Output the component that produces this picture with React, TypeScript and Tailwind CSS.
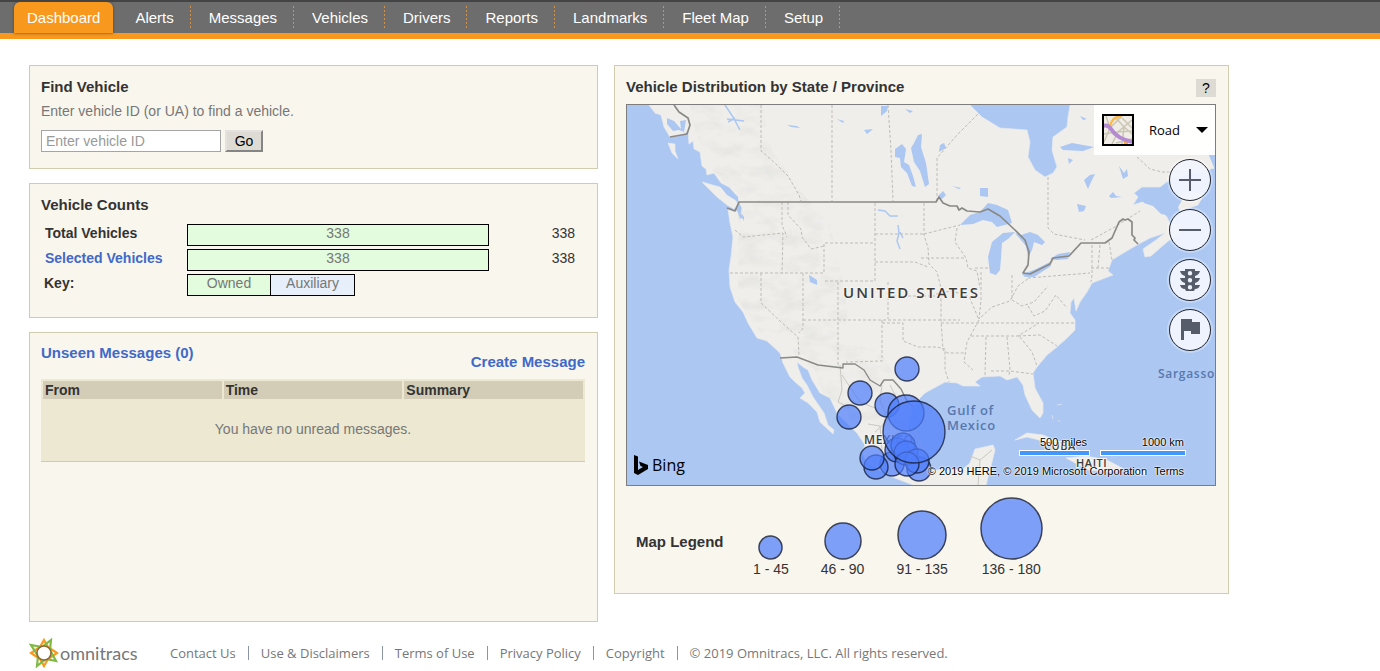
import React from "react";

const navItems = ["Alerts", "Messages", "Vehicles", "Drivers", "Reports", "Landmarks", "Fleet Map", "Setup"];

const footerLinks = ["Contact Us", "Use & Disclaimers", "Terms of Use", "Privacy Policy", "Copyright"];

const clusters = [
  [907, 369, 12],
  [860, 393, 12],
  [849, 417, 12],
  [887, 405, 12],
  [892, 464, 12],
  [897, 450, 12],
  [919, 469, 12],
  [876, 467, 12],
  [872, 458, 12],
  [906, 413, 18],
  [903, 445, 12],
  [906, 453, 12],
  [917, 461, 12],
  [907, 464, 12],
  [914, 432, 31],
];

const legend = [
  { label: "1 - 45", size: 25 },
  { label: "46 - 90", size: 38 },
  { label: "91 - 135", size: 50 },
  { label: "136 - 180", size: 63 },
];

function Card({ className = "", children }: { className?: string; children: React.ReactNode }) {
  return <section className={`border border-[#d0cdaf] bg-[#f9f6ee] ${className}`}>{children}</section>;
}

function NavBar() {
  return (
    <nav className="flex h-[39px] border-t-2 border-b-6 border-t-[#444] border-b-[#f8981d] bg-[#6d6d6d] pl-[14px] text-[15px] text-white">
      <a href="#dashboard" className="mr-1 flex items-center rounded-t-md bg-[#f8981d] px-[13px] shadow-[0_0_3px_#444]">
        Dashboard
      </a>
      {navItems.map((item) => (
        <a key={item} href={"#" + item} className="flex items-center pl-[18px]">
          {item}
          <svg className="ml-4 h-[24px] w-px" viewBox="0 0 1 24" shapeRendering="crispEdges" aria-hidden="true">
            <path d="M0 0h1v2h-1ZM0 4h1v2h-1ZM0 8h1v2h-1ZM0 12h1v2h-1ZM0 16h1v2h-1ZM0 20h1v2h-1Z" fill="#d8913f" />
          </svg>
        </a>
      ))}
    </nav>
  );
}

function MapDrawing() {
  return (
    <svg
      className="absolute inset-0 h-full w-full"
      viewBox="627 105 588 380"
      preserveAspectRatio="xMidYMid slice"
      role="img"
      aria-label="Vehicle distribution map"
    >
      <defs>
        <filter id="relief" x="0" y="0" width="1" height="1">
          <feTurbulence type="fractalNoise" baseFrequency=".05 .09" numOctaves="4" seed="11" />
          <feColorMatrix values="0 0 0 0 .6  0 0 0 0 .6  0 0 0 0 .58  1.2 0 0 0 -.5" />
        </filter>
        <clipPath id="mountains">
          <path d="M690 105H762L772 150L800 190L830 225L845 290L850 345L880 350L900 385L890 430L860 432L840 405L822 392L815 370L795 355L790 345L762 335L738 300V210L745 200L728 185L712 170L704 150L696 135Z" />
        </clipPath>
      </defs>
      <rect x="627" y="105" width="588" height="380" fill="#abc7f2" />
      <g fill="#efeeeb" stroke="#e6e9ec" strokeWidth=".7">
        <path d="M649 105L655 113L661 115L664 127L670 137L682 135L688 131L689 144L693 141L694 149L700 152L702 166L706 169L707 175L714 173L721 183L729 187L738 197L739 202L742 208L741 214L744 218L740 219L737 211L728 209L730 223L733 237L731 257L729 270L730 287L735 302L743 312L748 323L757 338L767 341L780 353L783 363L790 377L795 382L802 388L805 393L800 398L808 403L817 412L820 422L833 434L834 430L828 425L824 413L820 407L813 397L807 385L802 378L798 367L797 362L803 367L808 370L812 380L820 393L830 398L837 413L847 423L857 433L865 445L862 452L867 463L887 475L913 485H986L990 470L995 450L993 445L975 449L970 463L963 469L935 470L918 462L910 445L908 425L912 410L920 398L925 393L945 382L957 383L963 386L980 386L975 382L982 377L1000 376L1007 380L1017 377L1023 385L1025 395L1032 410L1040 418L1043 413L1043 403L1035 388L1033 373L1037 367L1047 355L1057 347L1067 338L1075 330L1075 320L1070 313L1071 302L1074 298L1076 311L1080 302L1087 292L1092 283L1113 275L1108 271L1112 260L1120 255L1137 245L1150 238L1165 233L1156 240L1143 249L1145 257L1151 256L1167 242L1183 230L1180 224L1170 224L1167 217L1157 207L1142 202L1133 205L1138 197L1134 193L1142 187L1160 187L1172 178L1215 168V105H1070L1068 117L1067 127L1053 137L1052 150L1057 167L1053 173L1045 177L1035 170L1028 157L1030 142L1027 130L1000 128L982 117L970 105Z" />
        <path d="M702 182L720 187L732 195L738 204L734 209L727 205L717 197Z" />
        <path d="M668 143L675 144L675 151L678 159L672 153Z" />
        <path d="M1015 440L1027 433L1043 435L1057 441L1075 452L1062 451L1043 441L1027 437ZM1066 458L1086 456L1107 460L1124 469L1112 472L1088 470ZM1136 471L1146 471L1146 475H1136Z" />
        <path d="M1176 202L1186 192L1204 194L1198 205L1180 211Z" />
        <path d="M1057 405l5-1M1058 420l2 2M1052 415l1 4" />
      </g>
      <g clipPath="url(#mountains)">
        <rect x="627" y="105" width="300" height="340" filter="url(#relief)" opacity=".45" />
      </g>
      <g fill="#abc7f2">
        <path d="M667 118L674 121L681 129L680 121L686 120L684 132L679 130L673 131L667 124Z" />
        <path d="M719 185L727 187L738 197L737 201L727 195ZM741 213l3 4v4l-2-4Z" />
        <path d="M960 225L970 215L980 212L988 203L997 205L1008 210L1012 223L997 227L992 222L983 220L973 224Z" />
        <path d="M992 242L1003 233L1015 232L1008 239L1002 243L1001 258L1000 270L996 275L990 273L988 257Z" />
        <path d="M1015 233L1021 235L1030 232L1038 235L1045 242L1042 245L1034 242L1032 250L1028 257L1026 246Z" />
        <path d="M1022 274L1034 270L1050 262L1051 266L1034 277L1025 277Z" />
        <path d="M1050 259L1058 254L1070 252L1068 259L1057 260Z" />
        <path d="M895 149L902 144L906 149L904 162L909 165L913 176L916 187L912 186L907 173L901 167L900 158L895 157Z" />
        <path d="M911 148L914 143L918 135L922 134L921 147L926 163L929 184L925 187L920 171L914 162Z" />
        <path d="M940 145l4-2l2 5l-7 4ZM980 188h8v9l-8-1ZM938 196l5-5l3 4l-4 4ZM952 186l9 2l-2 1Z" />
        <path d="M881 106h7l-1 5l-6 5ZM905 109l8 2l-3 2ZM837 119l7 2l-1 2ZM864 130l9-1l-6 5ZM787 125l10 1l3 2l-9-1Z" />
        <path d="M1060 147l12-4l22 4l-11 4l-20-1ZM1068 158l5 2l-4 4ZM1084 180l6-5l5-1l-4 8l-3 7ZM1119 166l5 7l3-4l1 7l-5 3ZM1077 204l9 2l-2 5l-5 1ZM1109 196l4-4l3 4l6 1l-11 1ZM1080 116l7 3l-4 1ZM1048 119l5-5l-2 6Z" />
        <path d="M809 275l8 5v5l-7-3Z" />
        <path d="M1144 192l14-3l18 3l6 8l-9 16l-12-2l-8-8l-9-3Z" />
        <path d="M1208 153L1215 147V170Z" />
      </g>
      <g fill="none" stroke="#abc7f2">
        <path d="M725 105L733 117L740 130M727 119L744 121M728 122L735 118M878 210l7 1l5 5l8 0M898 225l1 8l-2 8l3 8M900 232l3 6" strokeWidth="1.5" />
      </g>
      <g fill="none" stroke="#bfbcb8" strokeDasharray="3 2">
        <path d="M761 105V151L775 163L788 176L799 195L801 201M832 105V201M888 105L891 150L893 201M937 201V158L957 135L981 111M1048 177V228L1054 234L1085 240" />
        <path d="M782 202V225L787 237M788 202V215L801 229L802 237L811 249L824 246M735 230L743 237L764 235L783 233L782 273M730 273H824V243H875M875 203V281H824M761 273V303L780 321L798 337L799 355M803 273V328L799 333M803 320H960M838 282V365M888 282V319M882 320V361L846 362M882 323H903V341L918 347L937 347L945 349V370L949 382" />
        <path d="M875 234H924M875 262H915L928 267M888 296H935M924 203V235L928 248L929 264L937 272L941 288V320L943 350L948 353H966M921 258H966M924 234L960 225M957 228L955 242L966 258L968 268L977 271L980 288M975 268H992M936 294L951 291L969 296L979 320L967 342L964 362L973 370M981 272V300L979 319L992 307L1010 301L1018 286L1029 278M1012 275V300L1022 306L1034 302L1048 286M1028 278L1090 273M941 323H1075M971 336H1018L1039 323M986 337L985 375M1007 337L1010 369L1009 375M991 371H1010L1033 374M1020 337L1032 352L1037 366M1018 336L1040 335L1057 346M1028 306L1034 316L1045 311L1056 295L1067 308M1092 245V275L1091 282M1091 268L1110 268M1100 245L1098 268M1109 242L1112 260M1137 157L1150 169L1162 172H1185M1091 240L1113 228L1140 211" />
        <path d="M840 365L842 390L838 402L850 408M842 375L860 402L875 408M882 385L880 400L888 420L875 432M890 385L900 405M895 420L915 430L925 455M868 424L880 426L882 450M978 485L980 460L970 456M980 460L992 450" strokeDasharray="none" stroke="#cbc8c3" />
      </g>
      <g fill="none" stroke="#8a8985" strokeWidth="1.7" strokeLinejoin="round">
        <path d="M674 105L679 112L688 118L690 125L687 134L670 137" />
        <path d="M727 208L735 211L739 202H936L939 197L943 203L950 206L957 206L959 210L962 208L967 211L980 212L988 209L1000 216L1015 230L1025 240L1029 252L1028 265L1023 273L1030 274L1050 264L1053 258L1069 256L1081 243H1105L1112 238L1119 222L1123 219L1125 220L1128 219L1132 222V235L1135 238L1134 240L1138 244" />
        <path d="M780 358L797 357L818 365L843 368V364H855L864 370L870 380L880 386L884 380H893L901 389L908 403L914 407" strokeWidth="1.4" />
      </g>
      <g fill="#3d3d3d" className="font-['Open_Sans',sans-serif]" stroke="#f5f4f1" strokeWidth="2" paintOrder="stroke">
        <text x="843" y="298" className="text-[15px] font-semibold tracking-[2px]">UNITED STATES</text>
        <text x="864" y="444" className="text-[12px] font-semibold tracking-wider">MEXICO</text>
        <text x="1044" y="450" className="text-[11px] font-semibold tracking-wider">CUBA</text>
        <text x="1076" y="467" className="text-[11px] font-semibold tracking-wider">HAITI</text>
      </g>
      <g fill="#5878ae" className="font-['Open_Sans',sans-serif] font-semibold tracking-wider">
        <text x="947" y="415" className="text-[13px]">Gulf of</text>
        <text x="947" y="430" className="text-[13px]">Mexico</text>
        <text x="1158" y="378" className="text-[12px]">Sargasso</text>
        <text x="1042" y="493" className="text-[11px]">Caribbean Sea</text>
      </g>
      <g fill="#4f7dfc" fillOpacity=".7" stroke="#16203c" strokeOpacity=".8" strokeWidth="1.4">
        {clusters.map(([x, y, r]) => (
          <circle key={x + "-" + y} cx={x} cy={y} r={r} />
        ))}
      </g>
    </svg>
  );
}

function RoundButton({ label, children }: { label: string; children: React.ReactNode }) {
  return (
    <button
      type="button"
      aria-label={label}
      className="flex size-[42px] items-center justify-center rounded-full border border-[#22252c] bg-[#f1f5fd]/95 shadow-[0_0_0_2px_rgba(255,255,255,0.3)]"
    >
      <svg className="size-[22px]" viewBox="0 0 22 22" fill="#565c69" aria-hidden="true">
        {children}
      </svg>
    </button>
  );
}

function MapControls() {
  return (
    <div className="absolute top-0 right-0 flex flex-col items-end">
      <button type="button" className="flex h-[50px] w-[121px] items-center bg-white/95 pl-2 font-['Open_Sans',sans-serif] text-[13px] text-black">
        <svg className="size-8" viewBox="0 0 32 32" aria-hidden="true">
          <rect width="32" height="32" fill="#efede5" />
          <path d="M2 28L8 14L4 2M8 14L20 2M20 31L22 13L14 4M10 30L16 18L30 6M22 13L30 20M2 20L14 18L30 17M20 4L30 14M14 29L30 25" stroke="#cbc6b4" strokeWidth="1.5" fill="none" />
          <path d="M8 12Q10 3 19 2" stroke="#fdb94a" strokeWidth="2.5" fill="none" />
          <path d="M22 27h4v4h-4Z" fill="#fdb030" />
          <path d="M1 12Q6 10 9 15Q15 25 31 28" stroke="#b48bd0" strokeWidth="4" fill="none" />
          <rect x="1" y="1" width="30" height="30" fill="none" stroke="#000" strokeWidth="2" />
        </svg>
        <span className="ml-[15px]">Road</span>
        <svg className="ml-4 h-[6px] w-[12px]" viewBox="0 0 12 6" aria-hidden="true">
          <path d="M0 0H12L6 6Z" />
        </svg>
      </button>
      <div className="mt-1 mr-1 flex flex-col gap-2">
        <RoundButton label="Zoom in">
          <path d="M10 0h2v10h10v2H12v10h-2V12H0v-2h10Z" />
        </RoundButton>
        <RoundButton label="Zoom out">
          <path d="M0 10h22v2H0Z" />
        </RoundButton>
        <RoundButton label="Traffic">
          <path fillRule="evenodd" d="M6 0H16V2H21Q20 6 16 7V9H21Q20 13 16 14V16H21Q20 20 16 20L15 22H7L6 20Q2 20 1 16H6V14Q2 13 1 9H6V7Q2 6 1 2H6ZM11 2A2.2 2.2 0 1 0 11 6.4A2.2 2.2 0 1 0 11 2ZM11 9A2.2 2.2 0 1 0 11 13.4A2.2 2.2 0 1 0 11 9ZM11 16A2.2 2.2 0 1 0 11 20.4A2.2 2.2 0 1 0 11 16Z" />
        </RoundButton>
        <RoundButton label="Landmarks">
          <path d="M2 0H13V3H21V15H12V12H5V21H2Z" />
        </RoundButton>
      </div>
    </div>
  );
}

function MapScale() {
  return (
    <div className="absolute right-[29px] bottom-2 flex flex-col items-end font-['Liberation_Sans',Arial,sans-serif] text-[11px] text-black [text-shadow:0_0_2px_#fff,0_0_2px_#fff,0_0_1px_#fff]">
      <div className="flex gap-[10px] text-right leading-[15px]">
        <div className="w-[71px]">
          <span className="pr-[3px]">500 miles</span>
          <div className="h-[6px] border border-white bg-[#4197fb]" />
        </div>
        <div className="w-[86px]">
          <span className="pr-[2px]">1000 km</span>
          <div className="h-[6px] border border-white bg-[#4197fb]" />
        </div>
      </div>
      <div className="mt-[9px] flex gap-[7px] pr-[2px] leading-3 whitespace-nowrap">
        <span>© 2019 HERE, © 2019 Microsoft Corporation</span>
        <a href="#map-terms">Terms</a>
      </div>
    </div>
  );
}

function OmnitracsLogo() {
  return (
    <div className="flex w-[110px] items-center gap-px" role="img" aria-label="omnitracs">
      <svg className="size-[30px] shrink-0" viewBox="0 1 30 30" aria-hidden="true">
        <g fill="none" strokeWidth="2.2" strokeLinejoin="miter">
          <path d="M15 3L19 10L28 16L19 22L15 29L11 22L2 16L11 10Z" stroke="#f8981d" />
          <path d="M22 3L21 13L27 24L17 22L8 29L9 19L2 8L13 10Z" stroke="#7fba42" />
          <circle cx="15" cy="16" r="7" fill="#fff" stroke="#8a6a35" strokeWidth="1.6" />
        </g>
      </svg>
      <span className="font-[Lato,'Open_Sans',sans-serif] text-lg leading-6">omnitracs</span>
    </div>
  );
}

export default function App() {
  return (
    <div className="min-h-screen bg-white font-['Liberation_Sans',Arial,sans-serif] text-sm text-[#777]">
      <NavBar />
      <main className="mx-[29px] mt-[26px] grid max-w-[1200px] grid-cols-[569fr_615fr] items-start gap-4">
        <div className="flex flex-col gap-[14px]">
          <Card className="px-[11px] pt-3 pb-4">
            <h2 className="text-[15px] leading-[18px] font-bold text-[#333]">Find Vehicle</h2>
            <label htmlFor="vehicle-id" className="mt-[6px] block leading-[18px]">
              Enter vehicle ID (or UA) to find a vehicle.
            </label>
            <form className="mt-[10px] flex gap-1" onSubmit={(e) => e.preventDefault()}>
              <input
                id="vehicle-id"
                placeholder="Enter vehicle ID"
                className="h-[22px] w-[180px] border border-[#a5a5a5] bg-white px-1 placeholder:text-[#999]"
              />
              <button className="h-[22px] w-[38px] border-2 border-t-[#e4e2e0] border-r-[#858585] border-b-[#858585] border-l-[#e4e2e0] bg-[#dedbd5] leading-[18px] text-black">
                Go
              </button>
            </form>
          </Card>

          <Card className="px-[11px] pt-3 pb-[21px]">
            <h2 className="text-[15px] leading-[18px] font-bold text-[#333]">Vehicle Counts</h2>
            <dl className="mt-[10px] grid grid-cols-[146px_302px_1fr] gap-y-[3px] text-center leading-4">
              <dt className="pt-px pl-1 text-left font-bold text-[#333]">Total Vehicles</dt>
              <dd className="h-[22px] border border-black bg-[#e2fcdd]">338</dd>
              <dd className="pt-px pr-[11px] text-right text-[#333]">338</dd>
              <dt className="pt-px pl-1 text-left font-bold">
                <a href="#selected" className="text-[#4169c8]">Selected Vehicles</a>
              </dt>
              <dd className="h-[22px] border border-black bg-[#e2fcdd]">338</dd>
              <dd className="pt-px pr-[11px] text-right text-[#333]">338</dd>
              <dt className="pt-px pl-[3px] text-left font-bold text-[#333]">Key:</dt>
              <dd className="flex h-[22px]">
                <span className="w-[83px] border border-r-0 border-black bg-[#e2fcdd]">Owned</span>
                <span className="w-[85px] border border-black bg-[#e6effa]">Auxiliary</span>
              </dd>
            </dl>
          </Card>

          <Card className="px-[11px] pt-[11px] pb-[159px]">
            <div className="mr-px flex justify-between text-[15px] leading-[18px] font-bold text-[#4169c8]">
              <a href="#unseen">Unseen Messages (0)</a>
              <a href="#create" className="mt-[9px]">Create Message</a>
            </div>
            <div className="mt-2 mr-px border-b border-[#ccc9b8] bg-[#ece8d1]">
              <table className="w-full table-fixed border-separate border-spacing-x-[2px] border-spacing-y-0">
                <thead className="text-left leading-[18px] text-[#333]">
                  <tr>
                    {["From", "Time", "Summary"].map((h) => (
                      <th key={h} scope="col" className="border-t-2 border-[#ece8d1] bg-[#d3cdb8] px-[2px]">{h}</th>
                    ))}
                  </tr>
                </thead>
                <tbody>
                  <tr>
                    <td colSpan={3} className="h-[62px] pb-[2px] text-center">You have no unread messages.</td>
                  </tr>
                </tbody>
              </table>
            </div>
          </Card>
        </div>

        <Card className="px-[11px] pt-3 pb-[15px]">
          <div className="flex items-start justify-between">
            <h2 className="text-[15px] leading-[18px] font-bold text-[#333]">Vehicle Distribution by State / Province</h2>
            <button type="button" aria-label="Help" className="mt-px mr-px h-[18px] w-5 bg-[#dedbd5] leading-4 text-black">?</button>
          </div>
          <div className="relative mt-[7px] mr-px h-[382px] overflow-hidden border border-[#7d7d7d]">
            <MapDrawing />
            <MapControls />
            <MapScale />
            <div className="absolute bottom-2 left-[7px] flex items-center gap-1 font-['Open_Sans',sans-serif] text-base leading-6 text-black">
              <svg className="h-5 w-[14px]" viewBox="0 0 14 20" aria-hidden="true">
                <path d="M0 0L4 1.5V15L9 12L6.5 11L5 6.5L14 10V14L4 20L0 18Z" />
              </svg>
              Bing
            </div>
          </div>
          <div className="mt-[11px] flex items-end text-[#333]">
            <h3 className="mb-[27px] ml-[10px] w-[117px] text-[15px] leading-[18px] font-bold">Map Legend</h3>
            <ul className="flex items-end gap-8 text-center">
              {legend.map(({ label, size }) => (
                <li key={label} className="flex flex-col items-center leading-[18px] whitespace-nowrap">
                  <svg width={size} height={size} viewBox={`0 0 ${size} ${size}`} aria-hidden="true">
                    <circle cx={size / 2} cy={size / 2} r={size / 2 - 1} fill="#7e9ff8" stroke="#3b4256" strokeWidth="1.5" />
                  </svg>
                  {label}
                </li>
              ))}
            </ul>
          </div>
        </Card>
      </main>

      <footer className="mx-[29px] mt-[15px] flex h-8 items-center font-['Open_Sans',sans-serif] text-[13px]">
        <OmnitracsLogo />
        <div className="ml-[31px] flex items-center leading-[14px]">
          {footerLinks.map((l) => (
            <a key={l} href={"#" + l} className="mr-3 border-r border-[#8b96a5] pr-3">{l}</a>
          ))}
          <span>© 2019 Omnitracs, LLC. All rights reserved.</span>
        </div>
      </footer>
    </div>
  );
}
